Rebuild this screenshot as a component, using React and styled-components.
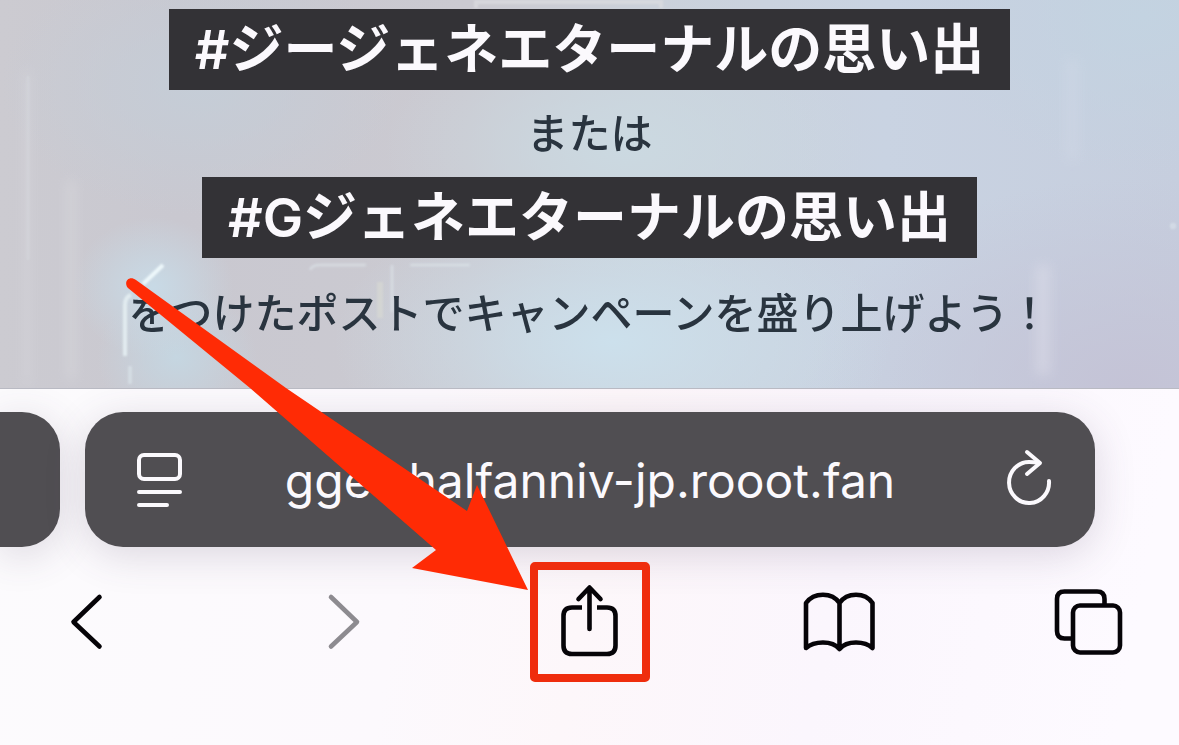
import React from "react";
import styled, { createGlobalStyle } from "styled-components";

const GlobalStyle = createGlobalStyle`
  *, *::before, *::after { box-sizing: border-box; }
  body {
    margin: 0;
    background: #fdf9fd;
    font-family: Inter, "Noto Sans CJK JP", sans-serif;
  }
`;

const Page = styled.div`
  display: flex;
  flex-direction: column;
  min-height: 100vh;
  overflow: hidden;
`;

const Banner = styled.main`
  position: relative;
  display: flex;
  flex-direction: column;
  align-items: center;
  padding: 9px 16px 43px;
  border-bottom: 1px solid #b9bac3;
  background:
    radial-gradient(ellipse 80px 70px at 13% 74%, #c8dae6 0%, #c8dae600 100%),
    radial-gradient(ellipse 80px 70px at 15% 92%, #c5d6e1 0%, #c5d6e100 100%),
    radial-gradient(ellipse 280px 150px at 52% 88%, #cce0ec 0%, #cce0ec00 100%),
    radial-gradient(ellipse 240px 130px at 53% 38%, #cbd9e1 0%, #cbd9e100 100%),
    radial-gradient(ellipse 200px 130px at 17% 22%, #c5cdd7 0%, #c5cdd700 100%),
    radial-gradient(ellipse 330px 210px at 96% 100%, #c4c3d6 0%, #c4c3d600 100%),
    radial-gradient(ellipse 220px 160px at 97% 4%, #c3d3e1 0%, #c3d3e100 100%),
    linear-gradient(90deg, #cccbd1 0%, #c9c8d0 15%, #cbcad1 40%, #cbd1da 55%, #c9d3e2 75%, #c6cede 100%);
`;

const Backdrop = styled.svg`
  position: absolute;
  inset: 0;
  width: 100%;
  height: 100%;
`;

const Hashtag = styled.strong`
  position: relative;
  padding: 0 26px;
  background: #333236;
  color: #fbf9fd;
  font-size: 54px;
  font-weight: 600;
  line-height: 81px;
  white-space: nowrap;
`;

const Copy = styled.p`
  position: relative;
  margin: ${(p) => (p.$closing ? "24px 0 0" : "12px 0")};
  color: #29343f;
  font-size: 42px;
  font-weight: 500;
  line-height: 63px;
  white-space: nowrap;
`;

const Chrome = styled.footer`
  flex: 1;
  padding-top: 23px;
  background: linear-gradient(100deg, #fcfbfd 0%, #fcf9fd 35%, #fdf7fa 50%, #fbf6fd 70%, #fdfaff 95%);
`;

const TabStrip = styled.div`
  display: grid;
  grid-template-columns: 60px minmax(0, 1fr);
  gap: 25px;
  height: 135px;
  padding-right: 84px;
`;

const PreviousTab = styled.button`
  border: 0;
  border-radius: 0 38px 38px 0;
  background: #504e52;
  box-shadow: 0 8px 40px #50406030;
`;

const AddressBar = styled.div`
  display: flex;
  padding: 0 40px;
  border-radius: 38px;
  background: #504e52;
  box-shadow: 0 8px 40px #50406030;
`;

const BarButton = styled.button`
  flex: none;
  width: 68px;
  padding: 0;
  border: 0;
  background: none;
  color: #fbf9fd;
`;

const Address = styled.input`
  flex: 1;
  min-width: 0;
  padding: 2px 0 0;
  border: 0;
  outline: 0;
  background: none;
  color: #fbf9fd;
  font-family: Inter, sans-serif;
  font-size: 48px;
  text-align: center;
`;

const Toolbar = styled.nav`
  display: flex;
  justify-content: space-between;
  padding: 15px 28px 0;
`;

const ToolButton = styled.button`
  position: relative;
  width: 120px;
  height: 120px;
  padding: 0;
  border: 0;
  background: none;
  color: ${(p) => (p.$muted ? "#8d8b90" : "#060408")};
`;

const HighlightFrame = styled.span`
  position: absolute;
  inset: 0;
  border: 8px solid #ef2d0d;
  border-radius: 5px;
`;

const Pointer = styled.svg`
  position: absolute;
  right: 120px;
  bottom: 90px;
  width: 404px;
  height: 316px;
  pointer-events: none;
`;

const Icon = styled.svg`
  display: block;
  fill: none;
  stroke: currentColor;
  stroke-width: ${(p) => p.$weight || 4};
  stroke-linecap: round;
  stroke-linejoin: round;
`;

function ToolIcon({ children }) {
  return (
    <Icon width="120" height="120" viewBox="0 0 120 120" $weight={4.6} aria-hidden="true">
      {children}
    </Icon>
  );
}

function LightStreaks() {
  return (
    <Backdrop viewBox="0 0 1179 388" preserveAspectRatio="none" aria-hidden="true">
      <defs>
        <filter id="soft" x="-50%" y="-20%" width="200%" height="140%">
          <feGaussianBlur stdDeviation="1" />
        </filter>
        <filter id="haze" x="-200%" y="-20%" width="500%" height="140%">
          <feGaussianBlur stdDeviation="6" />
        </filter>
      </defs>
      <g fill="#dcdce0" filter="url(#haze)" opacity=".4">
        <rect x="24" y="70" width="6" height="318" />
        <rect x="66" y="180" width="10" height="200" />
        <rect x="1036" y="265" width="14" height="110" fill="#e4e4ee" />
        <rect x="1066" y="60" width="12" height="100" fill="#d4dae8" />
      </g>
      <g fill="none" stroke="#e2ecf0" filter="url(#soft)">
        <path d="M163 265 L143 284" strokeWidth="4" stroke="#eef8fb" />
        <path d="M131 295 Q125 297 125 305 V356" strokeWidth="4" />
        <path d="M130 366 V384" strokeWidth="4" opacity=".5" />
        <path d="M310 270 Q312 265 320 265 H366 M392 265 V312 M410 265 H470" strokeWidth="3" opacity=".45" />
        <path d="M380 282 V318" stroke="#d9dad2" strokeWidth="6" opacity=".6" />
        <path d="M476 8 V2 H661 V8" strokeWidth="4" stroke="#dddde0" opacity=".7" />
        <path d="M28 76 V260" strokeWidth="2" opacity=".3" />
        <circle cx="1173" cy="226" r="2" strokeWidth="2" opacity=".6" />
      </g>
    </Backdrop>
  );
}

export default function App() {
  return (
    <Page>
      <GlobalStyle />
      <Banner>
        <LightStreaks />
        <Hashtag>#ジージェネエターナルの思い出</Hashtag>
        <Copy>または</Copy>
        <Hashtag>#Gジェネエターナルの思い出</Hashtag>
        <Copy $closing>をつけたポストでキャンペーンを盛り上げよう！</Copy>
      </Banner>
      <Chrome>
        <TabStrip>
          <PreviousTab type="button" aria-label="前のタブ" />
          <AddressBar>
            <BarButton type="button" aria-label="ページメニュー">
              <Icon width="68" height="135" viewBox="0 0 68 135" aria-hidden="true">
                <rect x="14" y="43" width="41" height="24" rx="5" />
                <path d="M14 80 H55 M14 93 H42" />
              </Icon>
            </BarButton>
            <Address aria-label="アドレス" readOnly value="gget-halfanniv-jp.rooot.fan" />
            <BarButton type="button" aria-label="再読み込み">
              <Icon width="68" height="135" viewBox="0 0 68 135" aria-hidden="true">
                <path d="M62 69 A20 20.500 0 1 1 42 50 Q47 50 52 51" />
                <path d="M40 40 L53 51 L40 62" />
              </Icon>
            </BarButton>
          </AddressBar>
        </TabStrip>
        <Toolbar aria-label="ツールバー">
          <ToolButton type="button" aria-label="戻る">
            <ToolIcon><path d="M71.500 35 L45.500 60 L71.500 84.500" /></ToolIcon>
          </ToolButton>
          <ToolButton type="button" aria-label="進む" $muted>
            <ToolIcon><path d="M52 35 L78 60 L52 84.500" /></ToolIcon>
          </ToolButton>
          <ToolButton type="button" aria-label="共有">
            <ToolIcon>
              <path strokeLinecap="butt" d="M52 45.500 H42 Q33.500 45.500 33.500 54 V83.500 Q33.500 92 42 92 H77 Q85.500 92 85.500 83.500 V54 Q85.500 45.500 77 45.500 H67" />
              <path d="M59.500 67 V26 M48.500 37 L59.500 25.500 L70.500 37" />
            </ToolIcon>
            <HighlightFrame />
            <Pointer viewBox="126 276 404 316" aria-hidden="true">
              <path
                fill="#ff2b05"
                d="M136 280 L286 388 L467 511 L477 485 L528 590 L412 568 L436 550 L250 388 L128 288 C123 282 129 275 136 280 Z"
              />
            </Pointer>
          </ToolButton>
          <ToolButton type="button" aria-label="ブックマーク">
            <ToolIcon>
              <path d="M59.500 41 C52 30 34 30 26 41 V86 C34 79 52 78 59.500 87 C67 78 85 79 92.500 86 V41 C85 30 67 30 59.500 41 V87" />
            </ToolIcon>
          </ToolButton>
          <ToolButton type="button" aria-label="タブ一覧">
            <ToolIcon>
              <rect x="42" y="43.500" width="47" height="47" rx="7" />
              <path strokeLinecap="butt" d="M73.500 43 V37 Q73.500 29.500 66 29.500 H33.500 Q26 29.500 26 37 V69 Q26 76.500 33.500 76.500 H42" />
            </ToolIcon>
          </ToolButton>
        </Toolbar>
      </Chrome>
    </Page>
  );
}
